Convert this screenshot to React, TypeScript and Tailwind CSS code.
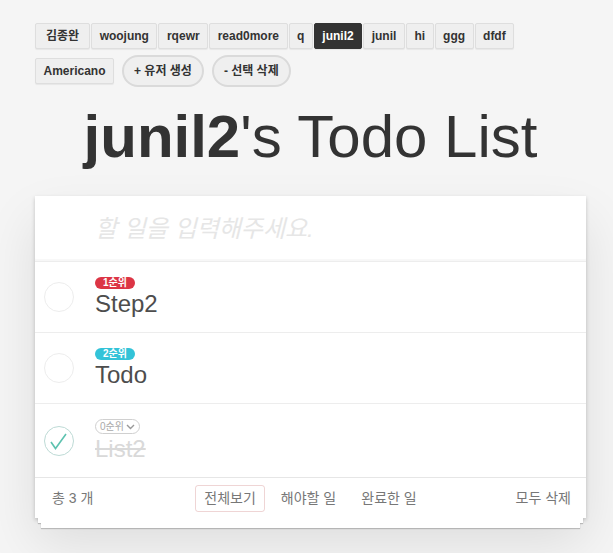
import * as React from "react"

const users = ["김종완", "woojung", "rqewr", "read0more", "q", "junil2", "junil", "hi", "ggg", "dfdf", "Americano"]

const todos = [
  { id: 1, text: "Step2", priority: "1순위", color: "bg-[#dc3545]", done: false },
  { id: 2, text: "Todo", priority: "2순위", color: "bg-[#33c3d8]", done: false },
  { id: 3, text: "List2", priority: "0순위", color: "", done: true },
]

function Check({ done }: { done: boolean }) {
  if (!done) {
    return <div className="h-[30px] w-[30px] rounded-full border border-[#ededed]" />
  }
  return (
    <svg width="30" height="30" viewBox="0 0 30 30">
      <circle cx="15" cy="15" r="14.5" fill="none" stroke="#bddad5" strokeWidth="1" />
      <path d="M7 16 L11.5 22.5 L22 8" fill="none" stroke="#5dc2af" strokeWidth="1.6" />
    </svg>
  )
}

export default function App() {
  const current = "junil2"

  return (
    <div className="min-h-[553px] bg-[#f5f5f5] font-['Liberation_Sans','Noto_Sans_CJK_KR',sans-serif] text-[#4d4d4d]">
      <div className="ml-[35px] w-[551px] pt-[23px]">
        <div className="flex flex-wrap items-center gap-y-[6px]">
          {users.map((u) => (
            <button
              key={u}
              className={`mr-px rounded-[2px] border py-[5px] text-[12px] leading-[14px] font-bold shadow-[0_1px_1px_rgba(0,0,0,0.06)] ${
                u === "김종완" ? "px-[10px]" : "px-[7.5px]"
              } ${
                u === current
                  ? "border-[#333] bg-[#333] text-white"
                  : "border-[#dedede] bg-[#efefef] text-[#333]"
              }`}
            >
              {u}
            </button>
          ))}
          <button className="ml-[7px] h-[32px] rounded-full border-2 border-[#dadada] bg-[#efefef] px-[10px] text-[12px] font-semibold text-[#333]">
            + 유저 생성
          </button>
          <button className="ml-[8px] h-[32px] rounded-full border-2 border-[#dadada] bg-[#efefef] px-[10px] text-[12px] font-semibold text-[#333]">
            - 선택 삭제
          </button>
        </div>

        <h1 className="mt-[15px] mb-[25px] text-center text-[60px] leading-[69px] text-[#333]">
          <span className="font-bold">{current}</span>'s Todo List
        </h1>

        <div className="bg-white shadow-[0_2px_4px_rgba(0,0,0,0.2),0_25px_50px_rgba(0,0,0,0.1)]">
          <input
            className="block h-[65px] w-full bg-white pl-[60px] pr-4 text-[24px] outline-none shadow-[inset_0_-2px_1px_rgba(0,0,0,0.03)] placeholder:italic placeholder:text-[#e6e6e6]"
            placeholder="할 일을 입력해주세요."
          />
          <ul>
            {todos.map((t) => (
              <li key={t.id} className="flex items-center border-t border-[#ededed]">
                <div className="w-[60px] shrink-0 pl-[9px]">
                  <Check done={t.done} />
                </div>
                <div className="pt-[15px] pb-[14px]">
                  {t.done ? (
                    <div className="flex h-[15px] w-[45px] items-center justify-between rounded-full border border-[#d0d0d0] px-[4px] text-[10px] leading-none text-[#aaa]">
                      <span>{t.priority}</span>
                      <svg width="9" height="6" viewBox="0 0 9 6">
                        <path d="M1 1 L4.5 4.5 L8 1" fill="none" stroke="#999" strokeWidth="1.4" />
                      </svg>
                    </div>
                  ) : (
                    <div className="flex h-[12px]">
                      <span className={`flex h-[12px] items-center rounded-full px-[8px] text-[10px] font-bold leading-none text-white ${t.color}`}>
                        {t.priority}
                      </span>
                    </div>
                  )}
                  <div
                    className={`text-[24px] leading-[29px] ${
                      t.done ? "text-[#d9d9d9] line-through" : "text-[#4d4d4d]"
                    }`}
                  >
                    {t.text}
                  </div>
                </div>
              </li>
            ))}
          </ul>
          <footer className="flex h-[41px] items-center justify-between border-t border-[#e6e6e6] px-[15px] text-[14px] text-[#777]">
            <span className="w-[120px] pl-[2px]">총 3 개</span>
            <div className="flex items-center gap-[7px]">
              <a className="rounded-[3px] border border-[rgba(175,47,47,0.2)] px-[8px] py-[2px]">전체보기</a>
              <a className="rounded-[3px] border border-transparent px-[8px] py-[2px]">해야할 일</a>
              <a className="rounded-[3px] border border-transparent px-[8px] py-[2px]">완료한 일</a>
            </div>
            <span className="w-[120px] text-right">모두 삭제</span>
          </footer>
        </div>
        <div className="mx-[3px] h-[5px] bg-white shadow-[0_1px_1px_rgba(0,0,0,0.2)]" />
        <div className="mx-[6px] h-[5px] bg-white shadow-[0_1px_1px_rgba(0,0,0,0.2)]" />
      </div>
    </div>
  )
}
